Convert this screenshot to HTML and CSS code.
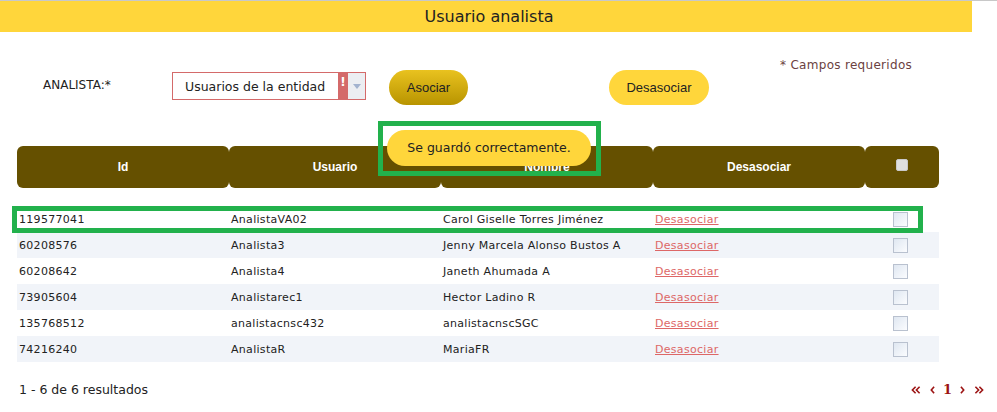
FILE: index.html
```html
<!DOCTYPE html>
<html lang="es">
	<head>
		<meta charset="UTF-8">
		<meta name="viewport" content="width=device-width, initial-scale=1.0">
		<title>Usuario analista</title>
		<link rel="stylesheet" href="styles.css">
	</head>
	<body>
		<div class="page">
			<h1 class="title-bar">Usuario analista</h1>

			<div class="form-row">
				<label class="field-label">ANALISTA:*</label>
				<div class="select-box">
					<span class="select-text">Usuarios de la entidad</span>
					<span class="select-error">!</span>
					<span class="select-arrow"><span class="arrow-down"></span></span>
				</div>
				<button class="btn btn-disabled">Asociar</button>
				<button class="btn btn-active">Desasociar</button>
				<div class="required-note">* Campos requeridos</div>
			</div>

			<table class="results">
				<thead>
					<tr>
						<th class="col-data">Id</th>
						<th class="col-data">Usuario</th>
						<th class="col-data">Nombre</th>
						<th class="col-data">Desasociar</th>
						<th class="col-check"><span class="head-check"></span></th>
					</tr>
				</thead>
				<tbody>
					<tr>
						<td>119577041</td>
						<td>AnalistaVA02</td>
						<td>Carol Giselle Torres Jiménez</td>
						<td><a href="#">Desasociar</a></td>
						<td class="cell-check"><span class="row-check"></span></td>
					</tr>
					<tr>
						<td>60208576</td>
						<td>Analista3</td>
						<td>Jenny Marcela Alonso Bustos A</td>
						<td><a href="#">Desasociar</a></td>
						<td class="cell-check"><span class="row-check"></span></td>
					</tr>
					<tr>
						<td>60208642</td>
						<td>Analista4</td>
						<td>Janeth Ahumada A</td>
						<td><a href="#">Desasociar</a></td>
						<td class="cell-check"><span class="row-check"></span></td>
					</tr>
					<tr>
						<td>73905604</td>
						<td>Analistarec1</td>
						<td>Hector Ladino R</td>
						<td><a href="#">Desasociar</a></td>
						<td class="cell-check"><span class="row-check"></span></td>
					</tr>
					<tr>
						<td>135768512</td>
						<td>analistacnsc432</td>
						<td>analistacnscSGC</td>
						<td><a href="#">Desasociar</a></td>
						<td class="cell-check"><span class="row-check"></span></td>
					</tr>
					<tr>
						<td>74216240</td>
						<td>AnalistaR</td>
						<td>MariaFR</td>
						<td><a href="#">Desasociar</a></td>
						<td class="cell-check"><span class="row-check"></span></td>
					</tr>
				</tbody>
			</table>

			<div class="pager-row">
				<span class="result-count">1 - 6 de 6 resultados</span>
				<div class="pager">
					<svg class="pager-icon double" viewBox="0 0 12 10"><path d="M5.5 1 1.5 5l4 4M10.5 1l-4 4 4 4"/></svg>
					<svg class="pager-icon single" viewBox="0 0 6 10"><path d="M5 1 1.5 5 5 9"/></svg>
					<span class="pager-num">1</span>
					<svg class="pager-icon single" viewBox="0 0 6 10"><path d="M1 1l3.5 4L1 9"/></svg>
					<svg class="pager-icon double" viewBox="0 0 12 10"><path d="M1.5 1l4 4-4 4M6.5 1l4 4-4 4"/></svg>
				</div>
			</div>

			<!-- mensaje flotante y marcas verdes encima de la tabla -->
			<div class="toast">Se guardó correctamente.</div>
			<div class="mark mark-toast"></div>
			<div class="mark mark-row"></div>
		</div>
	</body>
</html>
```

FILE: styles.css
```css
* {
    box-sizing: border-box;
    margin: 0;
    padding: 0;
}

body {
    font-family: "DejaVu Sans", Verdana, sans-serif;
    color: #1b1b1b;
    background: #fff;
    border-top: 1px solid #c8c8c8;
    height: 412px;
    overflow: hidden;
}

.page {
    position: relative;
    width: 972px;
}

.title-bar {
    height: 31px;
    line-height: 31px;
    margin-left: 0;
    background-color: #ffd63b;
    font-size: 16px;
    font-weight: 400;
    text-align: center;
    padding-left: 6px;
    color: #222;
}

/* Formulario */
.form-row {
    display: flex;
    align-items: flex-start;
    height: 114px;
    padding: 38px 0 0 43px;
}

.field-label {
    width: 129px;
    margin-top: 8px;
    font-size: 12px;
    color: #222;
}

.select-box {
    display: flex;
    width: 194px;
    height: 28px;
    margin-top: 2px;
    border: 1px solid #d46a6a;
    font-size: 12.5px;
}

.select-text {
    width: 165px;
    padding: 0 0 0 12px;
    line-height: 27px;
    color: #222;
}

.select-error {
    width: 10px;
    background-color: #d46a6a;
    color: #fff;
    font-size: 12px;
    font-weight: 700;
    line-height: 18px;
    text-align: center;
}

.select-arrow {
    flex: 1;
    display: flex;
    align-items: center;
    justify-content: center;
    background-color: #eceef2;
}

.arrow-down {
    border-left: 4px solid transparent;
    border-right: 4px solid transparent;
    border-top: 5px solid #a3b3cf;
}

.btn {
    height: 35px;
    border: none;
    border-radius: 18px;
    font-family: "Liberation Sans", Arial, sans-serif;
    font-size: 13px;
    color: #222;
}

.btn-disabled {
    width: 79px;
    margin-left: 23px;
    background: linear-gradient(#e9c21f, #b89400);
}

.btn-active {
    width: 100px;
    margin-left: 141px;
    background-color: #ffd63b;
}

.required-note {
    margin: -12px 0 0 71px;
    font-size: 12px;
    letter-spacing: 0.3px;
    color: #6b4141;
}

/* Tabla */
.results {
    width: 921px;
    margin-left: 17px;
    border-collapse: separate;
    border-spacing: 0;
    table-layout: fixed;
}

.results th {
    height: 42px;
    background-color: #655000;
    border-radius: 6px;
    color: #fff;
    font-size: 12px;
    font-weight: 400;
    font-family: "Liberation Sans", Arial, sans-serif;
    font-weight: 700;
}

.results thead tr::after {
    content: none;
}

.col-data {
    width: 212px;
}

.col-check {
    width: 74px;
}

.results tbody::before {
    content: "";
    display: block;
    height: 18px;
}

.results td {
    height: 26px;
    padding-left: 2px;
    font-size: 11px;
    letter-spacing: 0.3px;
    color: #222;
}

.results tbody tr:nth-child(even) {
    background-color: #f1f4f9;
}

.results a {
    color: #dd6767;
}

.cell-check {
    text-align: center;
}

.results .cell-check {
    padding: 0 3px 0 0;
}

.head-check,
.row-check {
    display: inline-block;
    vertical-align: middle;
}

.head-check {
    width: 12px;
    height: 12px;
    margin-bottom: 4px;
    border-radius: 2px;
    background-color: #e0e0e0;
    border: 1px solid #c9c9c9;
}

.row-check {
    width: 15px;
    height: 15px;
    border: 1px solid #b9c1cf;
    background: linear-gradient(135deg, #dfe7f1, #fbfcfe);
}

/* Paginador */
.pager-row {
    display: flex;
    justify-content: space-between;
    align-items: center;
    margin-top: 20px;
    padding: 0 0 0 19px;
}

.result-count {
    font-size: 12.5px;
    color: #222;
}

.pager {
    display: flex;
    align-items: center;
    gap: 8px;
    margin-right: -13px;
}

.pager-num {
    font-family: "DejaVu Serif", serif;
    font-size: 13px;
    font-weight: 700;
    color: #9c1313;
}

.pager-icon {
    height: 8px;
    fill: none;
    stroke: #9c1313;
    stroke-width: 2;
}

.pager-icon.double {
    width: 12px;
}

.pager-icon.single {
    width: 5px;
}

/* Elementos superpuestos */
.toast {
    position: absolute;
    left: 387px;
    top: 129px;
    width: 204px;
    height: 36px;
    line-height: 36px;
    border-radius: 18px;
    background-color: #ffd63b;
    font-size: 12.5px;
    text-align: center;
    color: #222;
}

.mark {
    position: absolute;
    border: 5px solid #22b14c;
}

.mark-toast {
    left: 378px;
    top: 120px;
    width: 223px;
    height: 55px;
}

.mark-row {
    left: 12px;
    top: 205px;
    width: 911px;
    height: 27px;
}
```
